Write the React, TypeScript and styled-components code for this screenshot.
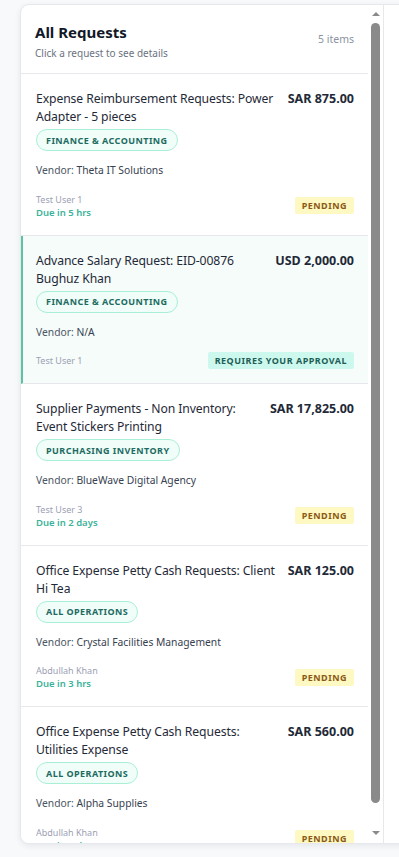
import React from "react";
import styled, { createGlobalStyle } from "styled-components";

const GlobalStyle = createGlobalStyle`
  html, body {
    margin: 0;
    padding: 0;
    overflow: hidden;
    background: #f8f9fb;
    font-family: "Noto Sans", "Open Sans", sans-serif;
    -webkit-font-smoothing: antialiased;
  }
  * { box-sizing: border-box; }
`;

const Page = styled.div`
  width: 100vw;
  height: 857px;
  padding: 4px 0 0 20px;
  overflow: hidden;
`;

const Panel = styled.div`
  width: 700px;
  height: 840px;
  display: flex;
  background: #ffffff;
  border: 1px solid #e6e8ec;
  border-radius: 9px;
  box-shadow: 0 2px 6px rgba(15, 23, 42, 0.08);
  overflow: hidden;
`;

const ListColumn = styled.div`
  width: 363px;
  flex-shrink: 0;
  height: 100%;
  display: flex;
  border-right: 1px solid #e6e8ec;
`;

const ListBody = styled.div`
  width: 347px;
  flex-shrink: 0;
  height: 100%;
  overflow: hidden;
`;

const ScrollBar = styled.div`
  width: 15px;
  height: 100%;
  display: flex;
  flex-direction: column;
  align-items: center;
  padding: 7px 0 8px;
  background: #ffffff;
`;

const ArrowUp = styled.div`
  width: 0;
  height: 0;
  border-left: 4px solid transparent;
  border-right: 4px solid transparent;
  border-bottom: 4px solid #8a8a8a;
`;

const ArrowDown = styled.div`
  width: 0;
  height: 0;
  margin-top: auto;
  border-left: 4px solid transparent;
  border-right: 4px solid transparent;
  border-top: 4px solid #8a8a8a;
`;

const Thumb = styled.div`
  width: 9px;
  height: 780px;
  margin-top: 7px;
  border-radius: 5px;
  background: #8a8a8a;
`;

const Header = styled.div`
  display: flex;
  justify-content: space-between;
  align-items: flex-start;
  padding: 16px 14px 0 14px;
  border-bottom: 1px solid #e6e8ec;
  height: 69px;
`;

const HeaderText = styled.div`
  display: flex;
  flex-direction: column;
`;

const Title = styled.h2`
  margin: 0;
  font-size: 15px;
  line-height: 22px;
  font-weight: 700;
  color: #111827;
`;

const Subtitle = styled.div`
  font-size: 10px;
  line-height: 15px;
  color: #6b7280;
  margin-top: 3px;
`;

const Count = styled.div`
  font-size: 10.5px;
  line-height: 15px;
  color: #8b93a1;
  margin-top: 11px;
`;

const Card = styled.div<{ $selected?: boolean }>`
  padding: 16px 14px 16px ${(p) => (p.$selected ? "13px" : "15px")};
  border-bottom: 1px solid #e6e8ec;
  border-left: ${(p) => (p.$selected ? "2px solid #5cc4a5" : "none")};
  background: ${(p) => (p.$selected ? "#f6fcfa" : "#ffffff")};
  cursor: pointer;
`;

const TitleRow = styled.div`
  display: flex;
  justify-content: space-between;
  align-items: flex-start;
  gap: 8px;
`;

const ReqTitle = styled.div`
  font-size: 12.2px;
  line-height: 18px;
  letter-spacing: -0.1px;
  color: #1f2937;
`;

const Amount = styled.div`
  font-size: 12.5px;
  line-height: 18px;
  font-weight: 700;
  color: #1f2937;
  white-space: nowrap;
`;

const Tag = styled.div`
  display: flex;
  align-items: center;
  width: fit-content;
  height: 22px;
  margin-top: 3px;
  padding: 0 9px;
  border: 1px solid #a9efd6;
  border-radius: 999px;
  background: #f0fdf9;
  color: #1d6b61;
  font-size: 9px;
  font-weight: 700;
  letter-spacing: 0.45px;
  text-transform: uppercase;
`;

const Vendor = styled.div`
  margin-top: 11px;
  font-size: 10.3px;
  line-height: 16px;
  color: #4b5563;
`;

const VendorName = styled.span`
  color: #374151;
`;

const Footer = styled.div`
  margin-top: 14.5px;
  display: flex;
  justify-content: space-between;
  align-items: center;
`;

const Meta = styled.div`
  display: flex;
  flex-direction: column;
`;

const User = styled.div`
  font-size: 9px;
  line-height: 13px;
  color: #9ca0b4;
`;

const Due = styled.div`
  font-size: 9.5px;
  line-height: 13px;
  font-weight: 600;
  color: #3bb39a;
`;

const Badge = styled.span<{ $kind: "pending" | "approval" }>`
  display: inline-flex;
  align-items: center;
  height: 17px;
  margin: -2px 0;
  padding: 0 7px;
  border-radius: 2px;
  font-size: 9px;
  font-weight: 700;
  letter-spacing: 0.5px;
  text-transform: uppercase;
  background: ${(p) => (p.$kind === "pending" ? "#fef8c3" : "#cdf8ee")};
  color: ${(p) => (p.$kind === "pending" ? "#8a5a14" : "#1d5e57")};
`;

type Req = {
  title: string;
  amount: string;
  dept: string;
  vendor: string;
  user: string;
  due?: string;
  status: "pending" | "approval";
  selected?: boolean;
};

const requests: Req[] = [
  {
    title: "Expense Reimbursement Requests: Power Adapter - 5 pieces",
    amount: "SAR 875.00",
    dept: "Finance & Accounting",
    vendor: "Theta IT Solutions",
    user: "Test User 1",
    due: "Due in 5 hrs",
    status: "pending",
  },
  {
    title: "Advance Salary Request: EID-00876 Bughuz Khan",
    amount: "USD 2,000.00",
    dept: "Finance & Accounting",
    vendor: "N/A",
    user: "Test User 1",
    status: "approval",
    selected: true,
  },
  {
    title: "Supplier Payments - Non Inventory: Event Stickers Printing",
    amount: "SAR 17,825.00",
    dept: "Purchasing Inventory",
    vendor: "BlueWave Digital Agency",
    user: "Test User 3",
    due: "Due in 2 days",
    status: "pending",
  },
  {
    title: "Office Expense Petty Cash Requests: Client Hi Tea",
    amount: "SAR 125.00",
    dept: "All Operations",
    vendor: "Crystal Facilities Management",
    user: "Abdullah Khan",
    due: "Due in 3 hrs",
    status: "pending",
  },
  {
    title: "Office Expense Petty Cash Requests: Utilities Expense",
    amount: "SAR 560.00",
    dept: "All Operations",
    vendor: "Alpha Supplies",
    user: "Abdullah Khan",
    due: "Due in 2 days",
    status: "pending",
  },
];

export default function App() {
  return (
    <>
      <GlobalStyle />
      <Page>
        <Panel>
          <ListColumn>
            <ListBody>
              <Header>
                <HeaderText>
                  <Title>All Requests</Title>
                  <Subtitle>Click a request to see details</Subtitle>
                </HeaderText>
                <Count>5 items</Count>
              </Header>
              {requests.map((r, i) => (
                <Card key={i} $selected={r.selected}>
                  <TitleRow>
                    <ReqTitle>{r.title}</ReqTitle>
                    <Amount>{r.amount}</Amount>
                  </TitleRow>
                  <Tag>{r.dept}</Tag>
                  <Vendor>
                    Vendor: <VendorName>{r.vendor}</VendorName>
                  </Vendor>
                  <Footer>
                    <Meta>
                      <User>{r.user}</User>
                      {r.due && <Due>{r.due}</Due>}
                    </Meta>
                    <Badge $kind={r.status}>
                      {r.status === "pending" ? "Pending" : "Requires your approval"}
                    </Badge>
                  </Footer>
                </Card>
              ))}
            </ListBody>
            <ScrollBar>
              <ArrowUp />
              <Thumb />
              <ArrowDown />
            </ScrollBar>
          </ListColumn>
        </Panel>
      </Page>
    </>
  );
}
